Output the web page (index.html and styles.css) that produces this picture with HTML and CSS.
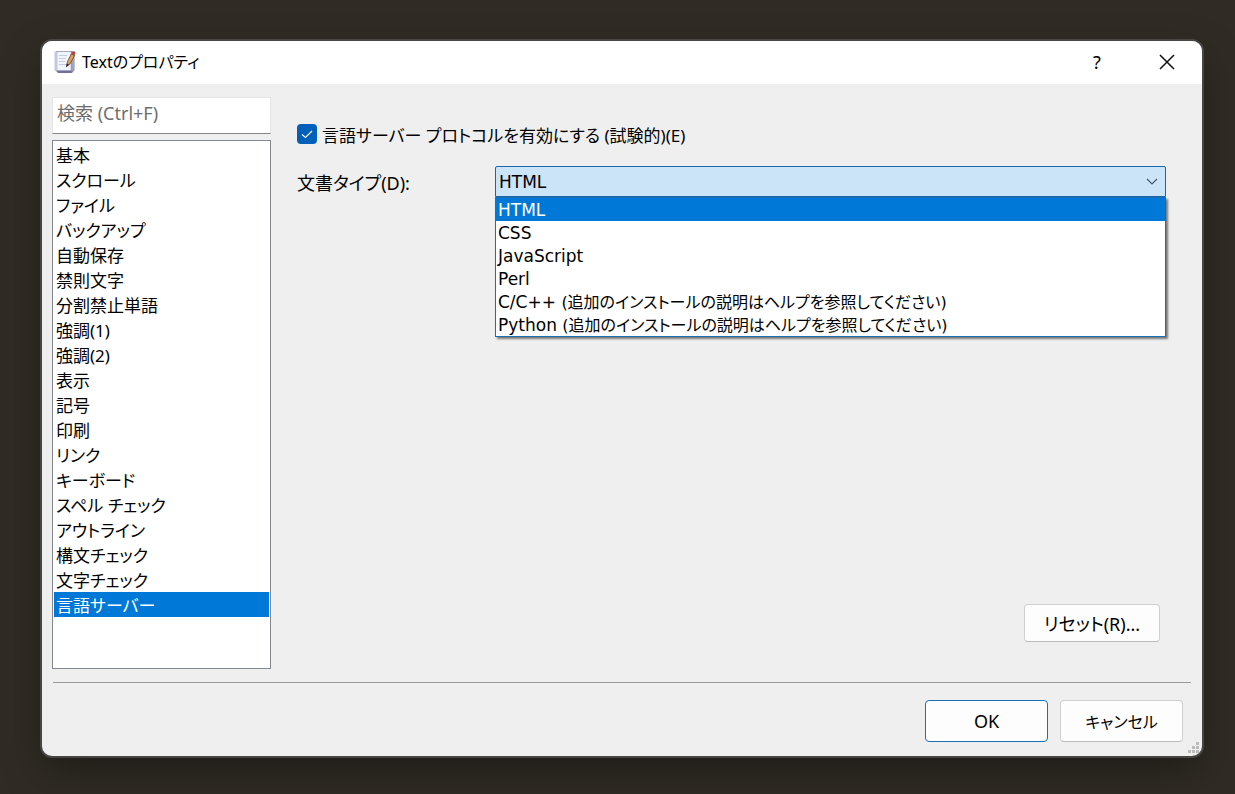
FILE: index.html
```
<!DOCTYPE html>
<html lang="ja">
<head>
  <meta charset="utf-8">
  <title>Textのプロパティ</title>
  <link rel="stylesheet" href="styles.css">
</head>
<body>

  <div class="window" role="dialog" aria-labelledby="title">

    <!-- Title bar -->
    <header class="titlebar">
      <svg class="app-icon" width="22" height="24" viewBox="0 0 22 24" aria-hidden="true">
        <path d="M2 1 H18 L20.500 3 V20 L18 23 H4 L1 20 Z" fill="#8485a8"/>
        <path d="M17 3 L20 4 V19.500 L17.500 21.500 Z" fill="#a3a4c4"/>
        <path d="M.5 1.500 H17 V20.500 H.5 Z" fill="#c3c8e2"/>
        <path d="M3.500 2 H16.500 V20 H3.500 Z" fill="#f2f4fe"/>
        <path d="M5 5.500H13M5 8.500H12M5 11.500H11M5 14.500H12" stroke="#c3cbe6" fill="none"/>
        <path d="M4 22 H17.500" stroke="#5d5f80" fill="none"/>
        <path d="M12.500 16 L13.500 11.500 L17.300 4 L20.500 5.500 L16 14 Z" fill="#d8a35c" stroke="#6b3d26" stroke-width=".8"/>
        <path d="M17.300 4 L18.300 1.800 Q20 .6 21.500 2.500 L20.500 5.500 Z" fill="#b84636"/>
        <path d="M12 17.500 L13 13.500 L15 14.800 Z" fill="#2b2424"/>
      </svg>
      <h1 id="title">Textのプロパティ</h1>
      <button class="caption-btn" aria-label="ヘルプ">?</button>
      <button class="caption-btn" aria-label="閉じる">
        <svg width="16" height="16" viewBox="0 0 16 16"><path d="M1 1 L15 15 M15 1 L1 15" stroke="#111" stroke-width="1.500" fill="none"/></svg>
      </button>
    </header>

    <main class="content">
      <!-- Category list -->
      <nav class="sidebar">
        <input class="search" type="text" placeholder="検索 (Ctrl+F)" aria-label="検索">
        <select class="categories" size="19" aria-label="カテゴリ">
          <option>基本</option>
          <option>スクロール</option>
          <option>ファイル</option>
          <option>バックアップ</option>
          <option>自動保存</option>
          <option>禁則文字</option>
          <option>分割禁止単語</option>
          <option>強調(1)</option>
          <option>強調(2)</option>
          <option>表示</option>
          <option>記号</option>
          <option>印刷</option>
          <option>リンク</option>
          <option>キーボード</option>
          <option>スペル チェック</option>
          <option>アウトライン</option>
          <option>構文チェック</option>
          <option>文字チェック</option>
          <option selected>言語サーバー</option>
        </select>
      </nav>

      <!-- Language server page -->
      <section class="page">
        <div class="check-row">
          <input type="checkbox" id="enable" checked>
          <label for="enable">言語サーバー プロトコルを有効にする (試験的)(E)</label>
        </div>

        <div class="field">
          <label for="doctype">文書タイプ(D):</label>
          <div class="combo">
            <select id="doctype">
              <option>HTML</option>
              <option>CSS</option>
              <option>JavaScript</option>
              <option>Perl</option>
              <option>C/C++</option>
              <option>Python</option>
            </select>
            <svg class="chevron" width="12" height="8" viewBox="0 0 12 8" aria-hidden="true"><path d="M1 1 L6 6 L11 1" stroke="#46586c" stroke-width="1.200" fill="none"/></svg>
            <ul class="dropdown" role="listbox" aria-label="文書タイプ">
              <li role="option" aria-selected="true">HTML</li>
              <li role="option">CSS</li>
              <li role="option">JavaScript</li>
              <li role="option">Perl</li>
              <li role="option">C/C++ <span class="note">(追加のインストールの説明はヘルプを参照してください)</span></li>
              <li role="option">Python <span class="note">(追加のインストールの説明はヘルプを参照してください)</span></li>
            </ul>
          </div>
        </div>

        <button class="btn reset">リセット(R)...</button>
      </section>
    </main>

    <footer class="footer">
      <button class="btn primary">OK</button>
      <button class="btn cancel">キャンセル</button>
    </footer>

    <svg class="grip" width="12" height="12" viewBox="0 0 12 12" aria-hidden="true">
      <path d="M8 0h3v3h-3zM4 4h3v3h-3zM8 4h3v3h-3zM0 8h3v3h-3zM4 8h3v3h-3zM8 8h3v3h-3z" fill="#bcbcbc"/>
    </svg>
  </div>

</body>
</html>
```
FILE: styles.css
```
* { box-sizing: border-box; }

body {
  margin: 0;
  min-height: 100vh;
  padding: 41px 33px 38px 42px;
  display: flex;
  background: #302c25;
  color: #000;
  font-family: "Noto Sans", "Noto Sans CJK JP", sans-serif;
  font-size: 18px;
  font-feature-settings: "palt";
}

button, input, select {
  font: inherit;
  font-feature-settings: inherit;
  color: inherit;
}

.window {
  position: relative;
  flex: 1;
  display: flex;
  flex-direction: column;
  background: #efefef;
  border-radius: 10px;
  box-shadow: 0 0 0 2px #474643, 0 16px 40px rgba(0, 0, 0, 0.35);
}

/* Title bar */
.titlebar {
  display: flex;
  align-items: center;
  height: 43px;
  padding: 0 0 2px 12px;
  background: #fff;
  border-radius: 10px 10px 0 0;
}

.titlebar h1 {
  flex: 1;
  margin: 0 0 0 6px;
  font-size: 16px;
  font-weight: normal;
  line-height: 24px;
}

.caption-btn {
  display: flex;
  align-items: center;
  justify-content: center;
  width: 70px;
  height: 41px;
  padding: 0;
  border: none;
  background: none;
}

/* Main area */
.content {
  flex: 1;
  display: flex;
  gap: 26px;
  margin: 0 11px;
  padding: 13px 0;
  border-bottom: 1px solid #9b9b9b;
}

.sidebar {
  display: flex;
  flex-direction: column;
  gap: 6px;
  width: 219px;
  margin-left: -1px;
}

.search {
  width: 100%;
  height: 37px;
  padding: 0 4px 5px;
  border: 1px solid #e5e5e5;
  border-bottom-color: #868686;
  background: #fff;
  outline: none;
}

.search::placeholder {
  color: #6d6d6d;
}

.categories {
  flex: 1;
  width: 100%;
  padding: 1px;
  border: 1px solid #828790;
  border-radius: 0;
  background: #fff;
  font-size: 17px;
  overflow: hidden;
  outline: none;
}

.categories option {
  height: 25px;
  min-height: 25px;
  padding: 0 2px;
  line-height: 24px;
}

.categories option:checked {
  background: #0078d7 linear-gradient(#0078d7, #0078d7);
  color: #fff;
}

.page {
  flex: 1;
  display: flex;
  flex-direction: column;
  padding: 24px 25px 27px 0;
}

.check-row {
  display: flex;
  align-items: center;
  gap: 5px;
  height: 26px;
  font-size: 17px;
}

.check-row input {
  appearance: none;
  width: 20px;
  height: 20px;
  margin: 0;
  border-radius: 4px;
  background: #005fb8 url("data:image/svg+xml,%3Csvg xmlns='http://www.w3.org/2000/svg' viewBox='0 0 20 20'%3E%3Cpath d='M5 10.500L8.500 13.500L15 7' fill='none' stroke='white' stroke-width='1.200'/%3E%3C/svg%3E");
}

.field {
  display: flex;
  align-items: center;
  margin-top: 19px;
}

.field > label {
  width: 198px;
}

.combo {
  position: relative;
  flex: 1;
  font-family: "DejaVu Sans", "Noto Sans CJK JP", sans-serif;
  font-size: 17px;
}

.combo select {
  display: block;
  appearance: none;
  width: 100%;
  height: 31px;
  padding: 0 3px;
  border: 1px solid #1a66a8;
  border-radius: 2px 2px 0 0;
  background: #cce4f7;
}

.chevron {
  position: absolute;
  top: 12px;
  right: 8px;
}

.dropdown {
  position: absolute;
  top: 31px;
  left: 0;
  right: 0;
  margin: 0;
  padding: 0;
  border: 1px solid #1b6fb0;
  background: #fff;
  box-shadow: 2px 2px 2px rgba(0, 0, 0, 0.5);
  list-style: none;
}

.dropdown li {
  height: 23px;
  padding-left: 2px;
  line-height: 24px;
  white-space: nowrap;
}

.dropdown li[aria-selected="true"] {
  background: #0078d7;
  color: #fff;
}

.note {
  font-size: 16px;
}

/* Buttons */
.btn {
  width: 123px;
  height: 42px;
  padding: 0;
  border: 1px solid #d0d0d0;
  border-bottom-color: #bcbcbc;
  border-radius: 4px;
  background: #fdfdfd;
}

.btn.primary {
  border-color: #1a6fb5;
}

.btn.cancel {
  font-size: 16px;
}

.btn.reset {
  width: 136px;
  height: 38px;
  margin: auto 6px 0 auto;
}

.footer {
  display: flex;
  justify-content: flex-end;
  gap: 12px;
  padding: 17px 19px 14px;
}

.grip {
  position: absolute;
  right: 2px;
  bottom: 2px;
}
```
